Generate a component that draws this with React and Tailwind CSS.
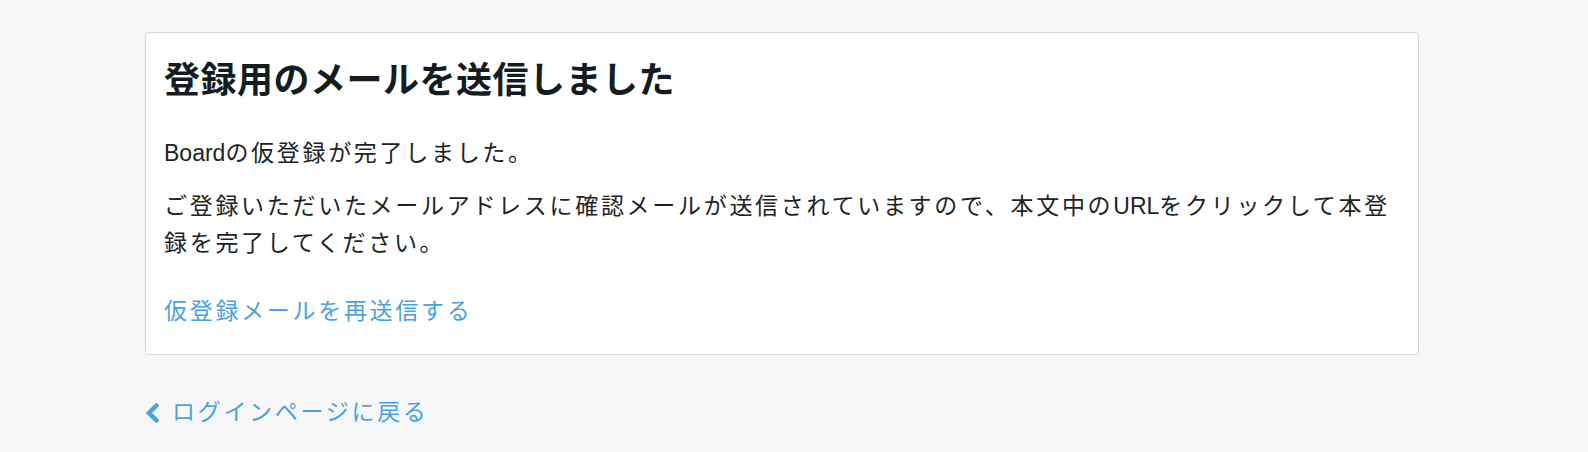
const font = { fontFamily: '"Liberation Sans", "Noto Sans CJK JP", sans-serif' }

const ChevronLeft = () => (
  <svg viewBox="0 0 15 20" className="w-[15px] h-[20px]" fill="none">
    <path d="M11.5 2.5 L4 10 L11.5 17.5" stroke="currentColor" strokeWidth="4.5" strokeLinecap="round" strokeLinejoin="miter" />
  </svg>
)

const App = () => {
  return (
    <div className="min-h-[452px] bg-[#f7f7f7] pt-8" style={font}>
      <div className="ml-[145px] w-[1274px]">
        {/* Card */}
        <div className="bg-white border border-[#d6d6d6] rounded-[4px] px-[18px] pt-[26px] pb-[24px]">
          <h2 className="text-[36px] leading-[1.2] font-bold text-[#151c20] tracking-[0.5px]">
            登録用のメールを送信しました
          </h2>
          <p className="mt-[33px] text-[23px] leading-[1.63] tracking-[2.7px] text-[#1e2326]">
            <span className="tracking-normal">Board</span>の仮登録が完了しました。
          </p>
          <p className="mt-[15px] text-[23px] leading-[1.63] tracking-[2.7px] text-[#1e2326]">
            ご登録いただいたメールアドレスに確認メールが送信されていますので、本文中の<span className="tracking-normal">URL</span>をクリックして本登録を完了してください。
          </p>
          <p className="mt-[30px] text-[23px] leading-[1.63] tracking-[2.7px]">
            <a href="#" className="text-[#4aa3de]">仮登録メールを再送信する</a>
          </p>
        </div>

        {/* Back link */}
        <a href="#" className="mt-[39px] flex items-center gap-[12px] text-[23px] leading-[1.63] tracking-[2.7px] text-[#4aa3de]">
          <ChevronLeft />
          <span>ログインページに戻る</span>
        </a>
      </div>
    </div>
  )
}

export default App
